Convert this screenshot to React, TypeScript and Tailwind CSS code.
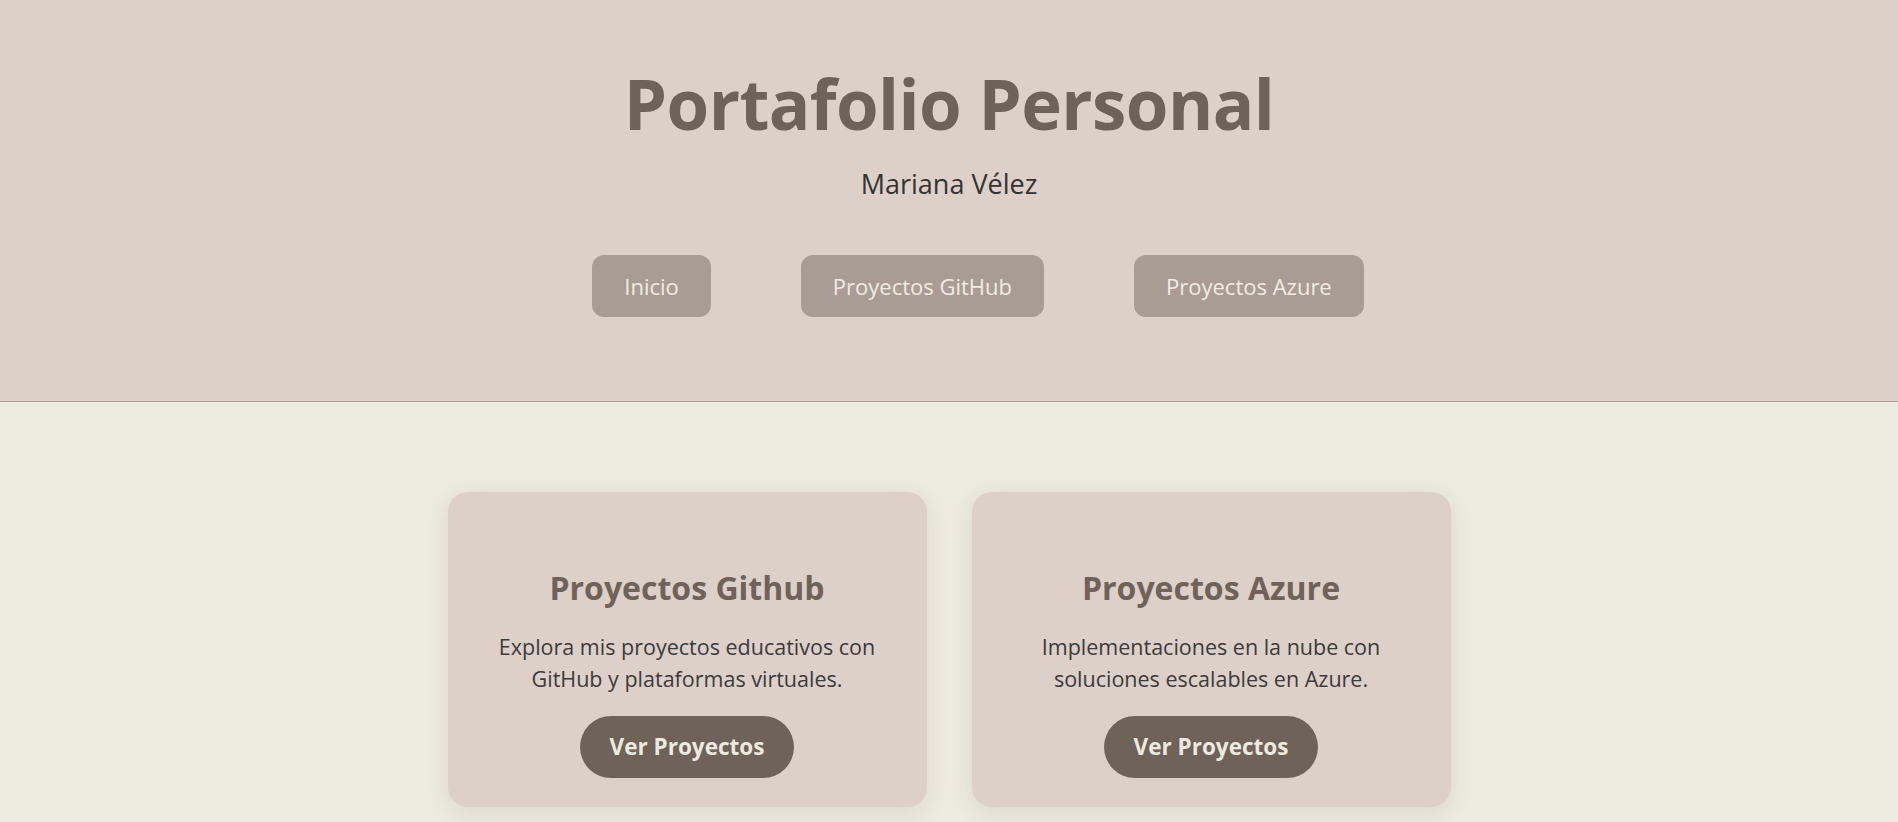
import React from "react";

const font = { fontFamily: '"Open Sans", "Noto Sans", Arial, sans-serif' };

function Card({ title, lines }: { title: string; lines: string[] }) {
  return (
    <div className="w-[479px] h-[315px] rounded-[20px] bg-[#DDD0C8] shadow-[0_6px_22px_rgba(80,60,40,0.10)] flex flex-col items-center pt-[80px]">
      <h2 className="text-[32px] leading-[32px] font-bold text-[#6F6259]">{title}</h2>
      <p className="mt-[27px] text-[21.5px] leading-[32px] text-[#3b3b3b] text-center">
        {lines[0]}
        <br />
        {lines[1]}
      </p>
      <button className="mt-[21px] h-[62px] px-[30px] rounded-full bg-[#6F6259] text-[#EDEADF] text-[22.5px] font-bold">
        Ver Proyectos
      </button>
    </div>
  );
}

export default function App() {
  return (
    <div style={font} className="min-h-screen bg-[#EDEADF]">
      <header className="bg-[#DDD0C8] border-b border-[#A99C94] pt-[67px] pb-[84px] flex flex-col items-center">
        <h1 className="text-[69px] leading-[72px] font-bold tracking-[-0.6px] text-[#6F6259]">Portafolio Personal</h1>
        <p className="mt-[31px] text-[27px] leading-[28px] text-[#333333]">Mariana Vélez</p>
        <nav className="mt-[57px] flex justify-center gap-[90px] pl-[58px]">
          {["Inicio", "Proyectos GitHub", "Proyectos Azure"].map((t) => (
            <a
              key={t}
              href="#"
              className="h-[62px] px-[32px] flex items-center rounded-[12px] bg-[#A99C94] text-[#F0ECE2] text-[22px]"
            >
              {t}
            </a>
          ))}
        </nav>
      </header>
      <main className="pt-[90px] pb-[60px] flex justify-center gap-[45px]">
        <Card
          title="Proyectos Github"
          lines={["Explora mis proyectos educativos con", "GitHub y plataformas virtuales."]}
        />
        <Card
          title="Proyectos Azure"
          lines={["Implementaciones en la nube con", "soluciones escalables en Azure."]}
        />
      </main>
    </div>
  );
}
